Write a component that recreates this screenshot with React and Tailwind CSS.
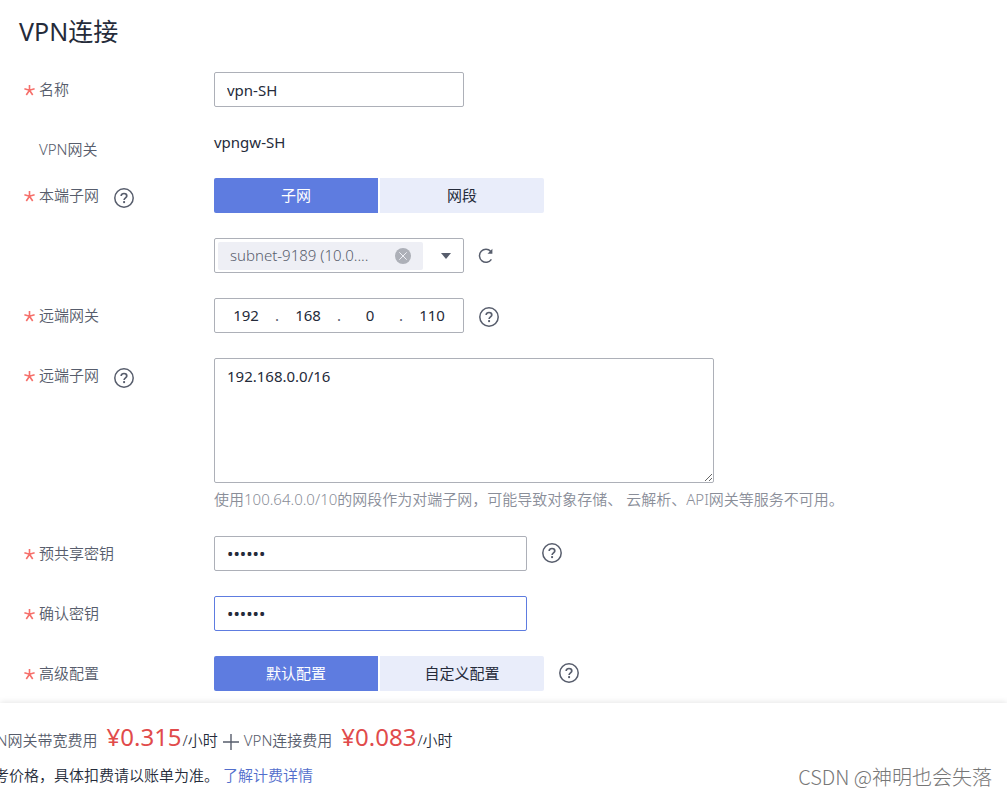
import { useState } from "react";

const FIELD =
  "h-[35px] rounded-xs border bg-white text-[15px] leading-5 font-normal text-[#252b3a] outline-none";

function HelpIcon({ label, className = "" }) {
  return (
    <button type="button" aria-label={label} className={`shrink-0 ${className}`}>
      <svg viewBox="0 0 20 20" className="size-5" fill="none" stroke="#575d6c">
        <circle cx="10" cy="10" r="9.2" strokeWidth="1.5" />
        <path d="M7.2 8.1C7.2 6.4 8.4 5.5 10 5.5s2.8.9 2.8 2.4c0 1.9-2.7 2-2.7 4.1" strokeWidth="1.7" />
        <path d="M10.1 13.1v2" strokeWidth="1.9" />
      </svg>
    </button>
  );
}

function Row({ label, htmlFor, required = true, help, className = "", children }) {
  return (
    <div className={`flex items-start ${className}`}>
      <div className="flex h-[35px] w-[195px] shrink-0 items-center pl-[5px]">
        <span className="flex w-[15px] shrink-0 items-center">
          {required && (
            <svg viewBox="0 0 11 12" className="h-3 w-[11px]" stroke="#f66f6a" strokeWidth="1.6" fill="none" aria-hidden="true">
              <path d="M5.5 1v5.2M.4 4.8l5.1 1.4 5.1-1.4M2.3 11l3.2-4.8L8.7 11" />
            </svg>
          )}
        </span>
        <label htmlFor={htmlFor} className="pb-0.5 text-[15px] leading-5 text-[#575d6c]">
          {label}
        </label>
        {help && <HelpIcon label={`${label}帮助`} className="ml-[15px] mt-[5px]" />}
      </div>
      {children}
    </div>
  );
}

function Segmented({ id, options }) {
  const [active, setActive] = useState(0);
  return (
    <div id={id} className="flex w-[330px] gap-0.5 overflow-hidden rounded-xs">
      {options.map((text, i) => (
        <button
          key={text}
          type="button"
          aria-pressed={i === active}
          onClick={() => setActive(i)}
          className={`h-[35px] flex-1 pb-0.5 text-[15px] leading-5 font-normal ${
            i === active ? "bg-[#5e7ce0] text-white" : "bg-[#e9edfa] text-[#252b3a]"
          }`}
        >
          {text}
        </button>
      ))}
    </div>
  );
}

function Price({ name, value }) {
  return (
    <span className="flex items-baseline">
      <span className="text-[#575d6c]">{name}</span>
      <span className="ml-[9px] text-2xl font-normal text-[#e14b4b]">{value}</span>
      <span className="ml-px">/小时</span>
    </span>
  );
}

export default function App() {
  return (
    <div className="flex min-h-screen flex-col overflow-hidden bg-white font-['Noto_Sans','Noto_Sans_CJK_SC',sans-serif] text-[15px] font-[350] text-[#252b3a]">
      <main className="flex-1 px-[19px] pt-[15px] pb-3">
        <h1 className="mb-[25px] text-[25px] leading-8 font-normal">VPN连接</h1>
        <form className="flex flex-col gap-[25px]">
          <Row label="名称" htmlFor="name">
            <input id="name" defaultValue="vpn-SH" className={`${FIELD} w-[250px] border-[#adb0b8] px-3`} />
          </Row>

          <Row label="VPN网关" required={false} className="-mb-[14px]">
            <span className="leading-[21px] font-normal">vpngw-SH</span>
          </Row>

          <Row label="本端子网" htmlFor="local" help>
            <div className="flex flex-col gap-[25px]">
              <Segmented id="local" options={["子网", "网段"]} />
              <div className="flex items-center gap-[13px]">
                <div className={`${FIELD} flex w-[250px] items-center border-[#adb0b8] pl-[3px]`}>
                  <span className="flex h-7 w-[205px] items-center justify-between rounded-xs bg-[#eeeff5] px-3 font-[350] text-[#575d6c]">
                    <span className="pb-0.5">subnet-9189 (10.0....</span>
                    <button type="button" aria-label="移除子网">
                      <svg viewBox="0 0 16 16" className="size-4" fill="none">
                        <circle cx="8" cy="8" r="8" fill="#adb0b8" />
                        <path d="M4.3 4.3l7.4 7.4M11.7 4.3l-7.4 7.4" stroke="#eeeff5" />
                      </svg>
                    </button>
                  </span>
                  <button type="button" aria-label="展开子网列表" className="ml-[18px]">
                    <svg viewBox="0 0 10 6" className="h-1.5 w-2.5">
                      <path d="M0 0h10L5 6z" fill="#575d6c" />
                    </svg>
                  </button>
                </div>
                <button type="button" aria-label="刷新">
                  <svg viewBox="0 0 18 18" className="size-[18px]" fill="none" stroke="#575d6c" strokeWidth="1.5">
                    <path d="M14.4 12.4A6.5 6.5 0 1 1 13.8 4.4" />
                    <path d="M15.4 1.8v4.9h-4.9z" fill="#575d6c" stroke="none" />
                  </svg>
                </button>
              </div>
            </div>
          </Row>

          <Row label="远端网关" htmlFor="ip-0">
            <div className={`${FIELD} flex w-[250px] items-center border-[#adb0b8] pb-0.5`}>
              {["192", "168", "0", "110"].map((part, i) => (
                <span key={part} className="flex flex-1 items-center">
                  {i > 0 && <span className="-ml-0.5 w-0.5 text-[#575d6c]">.</span>}
                  <input
                    id={`ip-${i}`}
                    aria-label={`远端网关第${i + 1}段`}
                    defaultValue={part}
                    className="w-full min-w-0 bg-transparent text-center outline-none"
                  />
                </span>
              ))}
            </div>
            <HelpIcon label="远端网关帮助" className="mt-[9px] ml-[15px]" />
          </Row>

          <Row label="远端子网" htmlFor="remote" help>
            <div className="flex flex-1 flex-col gap-[5px]">
              <textarea
                id="remote"
                defaultValue="192.168.0.0/16"
                className="block h-[125px] w-[500px] rounded-xs border border-[#adb0b8] px-3 py-[7px] leading-5 font-normal text-[#252b3a] outline-none"
              />
              <p className="pb-px leading-[22px] text-[#8a8e99]">
                使用100.64.0.0/10的网段作为对端子网，可能导致对象存储、 云解析、API网关等服务不可用。
              </p>
            </div>
          </Row>

          <Row label="预共享密钥" htmlFor="psk">
            <input id="psk" type="password" defaultValue="123456" className={`${FIELD.replace("text-[15px]", "text-[17px]")} w-[313px] border-[#adb0b8] px-3`} />
            <HelpIcon label="预共享密钥帮助" className="mt-[7px] ml-[15px]" />
          </Row>

          <Row label="确认密钥" htmlFor="psk2">
            <input id="psk2" type="password" defaultValue="123456" className={`${FIELD.replace("text-[15px]", "text-[17px]")} w-[313px] border-[#5e7ce0] px-3`} />
          </Row>

          <Row label="高级配置" htmlFor="advanced">
            <Segmented id="advanced" options={["默认配置", "自定义配置"]} />
            <HelpIcon label="高级配置帮助" className="mt-[7px] ml-[15px]" />
          </Row>
        </form>
      </main>

      <footer className="relative flex h-[93px] items-start justify-between bg-white pt-[17px] shadow-[0_-1px_6px_rgba(0,0,0,0.1)]">
        <div className="-ml-[21px] whitespace-nowrap">
          <div className="flex h-10 items-baseline leading-10">
            <Price name="VPN网关带宽费用" value="¥0.315" />
            <svg viewBox="0 0 16 16" className="mx-[5px] size-4 self-center translate-y-0.5" stroke="#575d6c" strokeWidth="1.4" aria-label="加">
              <path d="M8 0v16M0 8h16" />
            </svg>
            <Price name="VPN连接费用" value="¥0.083" />
          </div>
          <p className="flex gap-1 leading-[30px]">
            <span>参考价格，具体扣费请以账单为准。</span>
            <a href="#billing" className="text-[#526ecc]">了解计费详情</a>
          </p>
        </div>
        <span className="self-end pr-[15px] pb-[5px] font-['Noto_Sans_CJK_SC',sans-serif] text-xl leading-7 font-light text-[#777777]">
          CSDN @神明也会失落
        </span>
      </footer>
    </div>
  );
}
